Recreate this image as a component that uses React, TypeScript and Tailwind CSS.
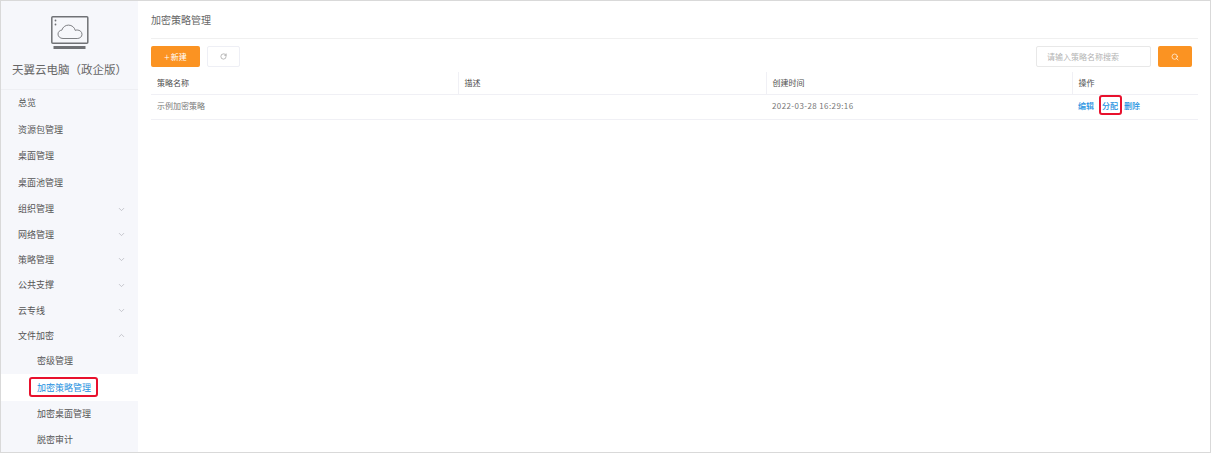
import { ChevronDown, ChevronUp, RotateCw, Search } from "lucide-react";

const font = { fontFamily: '"Noto Sans CJK SC", "Liberation Sans", sans-serif' };

const menu = [
  { label: "总览", h: "h-[26px]" },
  { label: "资源包管理", h: "h-[27px]" },
  { label: "桌面管理", h: "h-[26px]" },
  { label: "桌面池管理", h: "h-[27px]" },
  { label: "组织管理", h: "h-[26px]", arrow: "down" },
  { label: "网络管理", h: "h-[25px]", arrow: "down" },
  { label: "策略管理", h: "h-[25px]", arrow: "down" },
  { label: "公共支撑", h: "h-[26px]", arrow: "down" },
  { label: "云专线", h: "h-[25px]", arrow: "down" },
  { label: "文件加密", h: "h-[25px]", arrow: "up" },
];

const subMenu = [
  { label: "密级管理", h: "h-[26px]" },
  { label: "加密策略管理", h: "h-[27px]", active: true },
  { label: "加密桌面管理", h: "h-[26px]" },
  { label: "脱密审计", h: "h-[26px]" },
];

function CloudLogo() {
  return (
    <svg width="38" height="34" viewBox="0 0 38 34" fill="none" stroke="#707276">
      <rect x="0.800" y="0.800" width="36" height="26.500" rx="1" strokeWidth="1.500" />
      <circle cx="4.500" cy="4.500" r="0.900" fill="#707276" stroke="none" />
      <circle cx="4.500" cy="8.500" r="0.900" fill="#707276" stroke="none" />
      <path
        d="M12 22.500c-3 0-5-2-5-4.400 0-2.200 1.700-3.800 3.900-4 .8-3 3.500-5 6.600-5 3.400 0 6.100 2.300 6.700 5.300 .6-.3 1.300-.4 2-.4 2.700 0 4.800 1.900 4.800 4.300 0 2.500-2.100 4.200-4.800 4.200z"
        strokeWidth="0.900"
      />
      <rect x="2.500" y="30" width="32" height="3" fill="#707276" stroke="none" />
    </svg>
  );
}

export default function App() {
  return (
    <div className="flex h-[453px] w-[1211px] overflow-hidden border border-[#d9d9d9] bg-white" style={font}>
      <aside className="flex w-[137px] shrink-0 flex-col bg-[#f6f7fb]">
        <div className="flex h-[89px] shrink-0 flex-col items-center border-b border-[#eeeff3] pt-[15px]">
          <CloudLogo />
          <div className="mt-[10px] whitespace-nowrap text-[11.500px] leading-[18px] text-[#666666]">天翼云电脑（政企版）</div>
        </div>
        <nav className="flex flex-col text-[9px] text-[#555555]">
          {menu.map((item) => (
            <div key={item.label} className={`flex items-center justify-between pl-[17px] pr-[12px] ${item.h}`}>
              <span>{item.label}</span>
              {item.arrow === "down" && <ChevronDown size={9} className="text-[#b5b7bd]" />}
              {item.arrow === "up" && <ChevronUp size={9} className="text-[#b5b7bd]" />}
            </div>
          ))}
          {subMenu.map((item) =>
            item.active ? (
              <div key={item.label} className={`flex items-center bg-white pl-[36px] text-[#1b8fe0] ${item.h}`}>
                <span className="relative">
                  {item.label}
                  <span className="absolute -left-[8px] -right-[7px] -top-[4px] -bottom-[3px] rounded-[3px] border-2 border-[#e8112d]" />
                </span>
              </div>
            ) : (
              <div key={item.label} className={`flex items-center pl-[36px] ${item.h}`}>
                {item.label}
              </div>
            )
          )}
        </nav>
      </aside>

      <main className="flex min-w-0 flex-1 flex-col pl-[13px] pr-[12px]">
        <div className="flex h-[38px] shrink-0 items-center border-b border-[#f0f0f0] text-[10px] text-[#666666]">加密策略管理</div>
        <div className="mt-[7px] flex h-[21px] shrink-0 items-center">
          <button className="flex h-full w-[49px] items-center justify-center rounded-[2px] bg-[#fb9322] text-[8px] text-white">
            <span className="mr-[1px] text-[10px] font-light leading-none">+</span>新建
          </button>
          <button className="ml-[7px] flex h-full w-[33px] items-center justify-center rounded-[2px] border border-[#eeeff5] text-[#8c8c8c]">
            <RotateCw size={7} />
          </button>
          <div className="ml-auto flex h-full w-[115px] items-center rounded-[2px] border border-[#e8e8e8] pl-[10px] text-[8px] text-[#b3b3b3]">
            请输入策略名称搜索
          </div>
          <button className="ml-[7px] mr-[6px] flex h-full w-[34px] items-center justify-center rounded-[2px] bg-[#fb9322] text-white">
            <Search size={8} />
          </button>
        </div>

        <table className="mt-[5px] w-full table-fixed border-collapse text-left text-[8px]">
          <thead>
            <tr className="h-[22px] border-b border-[#f0f0f5] text-[#4d4d4d]">
              <th className="w-[307px] pl-[6px] font-normal">策略名称</th>
              <th className="w-[308px] border-l border-[#f0f0f5] pl-[6px] font-normal">描述</th>
              <th className="w-[306px] border-l border-[#f0f0f5] pl-[6px] font-normal">创建时间</th>
              <th className="border-l border-[#f0f0f5] pl-[6px] font-normal">操作</th>
            </tr>
          </thead>
          <tbody>
            <tr className="h-[25px] border-b border-[#f0f0f5] text-[#777777]">
              <td className="pb-[1px] pl-[6px]">示例加密策略</td>
              <td />
              <td className="pb-[1px] pl-[6px] tracking-[0.400px]">2022-03-28 16:29:16</td>
              <td className="pb-[1px] pl-[6px] font-medium text-[#1b8fe0]">
                <span>编辑</span>
                <span className="relative ml-[8px]">
                  分配
                  <span className="absolute -bottom-[4px] -left-[3px] -right-[4px] -top-[5px] rounded-[3px] border-2 border-[#e8112d]" />
                </span>
                <span className="ml-[6px]">删除</span>
              </td>
            </tr>
          </tbody>
        </table>
      </main>
    </div>
  );
}
